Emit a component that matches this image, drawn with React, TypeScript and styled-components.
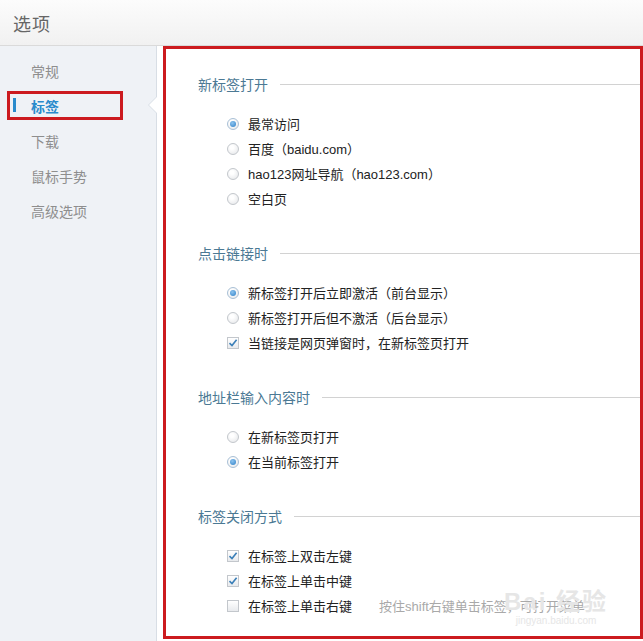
import styled, { createGlobalStyle, css } from "styled-components";

const GlobalStyle = createGlobalStyle`
  html, body {
    margin: 0;
    padding: 0;
    background: #fff;
  }
  body {
    font-family: "Liberation Sans", "Noto Sans CJK SC", sans-serif;
    font-size: 13px;
    color: #222;
  }
`;

const Page = styled.div`
  width: 643px;
  height: 641px;
  overflow: hidden;
  display: flex;
  flex-direction: column;
  position: relative;
`;

const Header = styled.header`
  height: 45px;
  flex: none;
  display: flex;
  align-items: center;
  padding-left: 13px;
  background: linear-gradient(#fcfcfc, #f1f1f1);
  border-bottom: 1px solid #dadada;
  h1 {
    margin: 0;
    font-size: 18px;
    font-weight: normal;
    color: #666;
    letter-spacing: 1px;
  }
`;

const Body = styled.div`
  flex: 1;
  display: flex;
  min-height: 0;
`;

const Sidebar = styled.nav`
  width: 157px;
  flex: none;
  background: #eff2f6;
  border-right: 1px solid #d8dee5;
  box-sizing: border-box;
  padding-top: 7px;
  display: flex;
  flex-direction: column;
`;

const NavItem = styled.div<{ $active?: boolean }>`
  height: 35px;
  display: flex;
  align-items: center;
  padding-left: 31px;
  font-size: 14px;
  color: #8e8e8e;
  position: relative;
  ${(p) =>
    p.$active &&
    css`
      color: #2a8bcc;
      font-weight: bold;
      &::before {
        content: "";
        position: absolute;
        left: 13px;
        top: 10px;
        width: 3px;
        height: 14px;
        background: #2a8bcc;
      }
      &::after {
        content: "";
        position: absolute;
        left: 7px;
        top: 3px;
        width: 116px;
        height: 29px;
        box-sizing: border-box;
        border: 3px solid #cc1b1f;
      }
    `}
`;

const Notch = styled.span`
  position: absolute;
  right: -1px;
  top: 8px;
  width: 0;
  height: 0;
  border-top: 9px solid transparent;
  border-bottom: 9px solid transparent;
  border-right: 9px solid #d8dee5;
  &::after {
    content: "";
    position: absolute;
    left: 1px;
    top: -8px;
    border-top: 8px solid transparent;
    border-bottom: 8px solid transparent;
    border-right: 8px solid #fff;
  }
`;

const Main = styled.main`
  flex: 1;
  padding-left: 6px;
  background: #fff;
  display: flex;
  min-width: 0;
`;

const Panel = styled.div`
  flex: 1;
  border: 3px solid #cc1b1f;
  margin-bottom: 2px;
  box-sizing: border-box;
  padding: 25px 0 0 32px;
  display: flex;
  flex-direction: column;
  gap: 32px;
  position: relative;
`;

const Section = styled.section`
  display: flex;
  flex-direction: column;
`;

const SectionTitle = styled.div`
  height: 20px;
  display: flex;
  align-items: center;
  gap: 12px;
  margin-bottom: 17px;
  font-size: 14px;
  color: #4b7994;
  white-space: nowrap;
  &::after {
    content: "";
    flex: 1;
    height: 1px;
    background: #d2d2d2;
  }
`;

const Options = styled.div`
  display: flex;
  flex-direction: column;
  padding-left: 29px;
`;

const Option = styled.label`
  height: 25px;
  display: flex;
  align-items: center;
  gap: 9px;
  font-size: 13px;
  color: #222;
  white-space: nowrap;
`;

const Radio = styled.span<{ $on?: boolean }>`
  width: 12px;
  height: 12px;
  box-sizing: border-box;
  border-radius: 50%;
  border: 1px solid #c3c7cc;
  background: radial-gradient(circle at 40% 35%, #fff 20%, #e2e4e7 100%);
  display: flex;
  align-items: center;
  justify-content: center;
  flex: none;
  ${(p) =>
    p.$on &&
    css`
      border-color: #a9c0d6;
      &::after {
        content: "";
        width: 6px;
        height: 6px;
        border-radius: 50%;
        background: radial-gradient(circle at 40% 35%, #8cc3ef, #2d7fc6);
      }
    `}
`;

const Box = styled.span`
  width: 12px;
  height: 12px;
  box-sizing: border-box;
  border: 1px solid #c3c7cc;
  background: linear-gradient(#fff, #e8eaed);
  flex: none;
  display: flex;
  align-items: center;
  justify-content: center;
  svg {
    display: block;
  }
`;

const Hint = styled.span`
  margin-left: 18px;
  color: #a9a9a9;
`;

// faint site watermark in the bottom-right corner
const Watermark = styled.div`
  position: absolute;
  right: 32px;
  bottom: 10px;
  display: flex;
  flex-direction: column;
  align-items: center;
  color: #e6e6e6;
  pointer-events: none;
  .logo {
    font-size: 24px;
    font-weight: bold;
    letter-spacing: 2px;
  }
  .url {
    font-size: 10px;
    margin-top: -2px;
  }
`;

const Check = ({ on }: { on?: boolean }) => (
  <Box>
    {on && (
      <svg width="10" height="10" viewBox="0 0 10 10">
        <path d="M1.5 5.2 L4 7.6 L8.6 1.8" fill="none" stroke="#3b7fb8" strokeWidth="1.6" />
      </svg>
    )}
  </Box>
);

const navItems = ["常规", "标签", "下载", "鼠标手势", "高级选项"];

export default function App() {
  return (
    <>
      <GlobalStyle />
      <Page>
        <Header>
          <h1>选项</h1>
        </Header>
        <Body>
          <Sidebar>
            {navItems.map((n) => (
              <NavItem key={n} $active={n === "标签"}>
                {n}
                {n === "标签" && <Notch />}
              </NavItem>
            ))}
          </Sidebar>
          <Main>
            <Panel>
              <Section>
                <SectionTitle>新标签打开</SectionTitle>
                <Options>
                  <Option><Radio $on />最常访问</Option>
                  <Option><Radio />百度（baidu.com）</Option>
                  <Option><Radio />hao123网址导航（hao123.com）</Option>
                  <Option><Radio />空白页</Option>
                </Options>
              </Section>
              <Section>
                <SectionTitle>点击链接时</SectionTitle>
                <Options>
                  <Option><Radio $on />新标签打开后立即激活（前台显示）</Option>
                  <Option><Radio />新标签打开后但不激活（后台显示）</Option>
                  <Option><Check on />当链接是网页弹窗时，在新标签页打开</Option>
                </Options>
              </Section>
              <Section>
                <SectionTitle>地址栏输入内容时</SectionTitle>
                <Options>
                  <Option><Radio />在新标签页打开</Option>
                  <Option><Radio $on />在当前标签打开</Option>
                </Options>
              </Section>
              <Section>
                <SectionTitle>标签关闭方式</SectionTitle>
                <Options>
                  <Option><Check on />在标签上双击左键</Option>
                  <Option><Check on />在标签上单击中键</Option>
                  <Option>
                    <Check />在标签上单击右键
                    <Hint>按住shift右键单击标签，可打开菜单</Hint>
                  </Option>
                </Options>
              </Section>
              <Watermark>
                <span className="logo">Bai 经验</span>
                <span className="url">jingyan.baidu.com</span>
              </Watermark>
            </Panel>
          </Main>
        </Body>
      </Page>
    </>
  );
}
